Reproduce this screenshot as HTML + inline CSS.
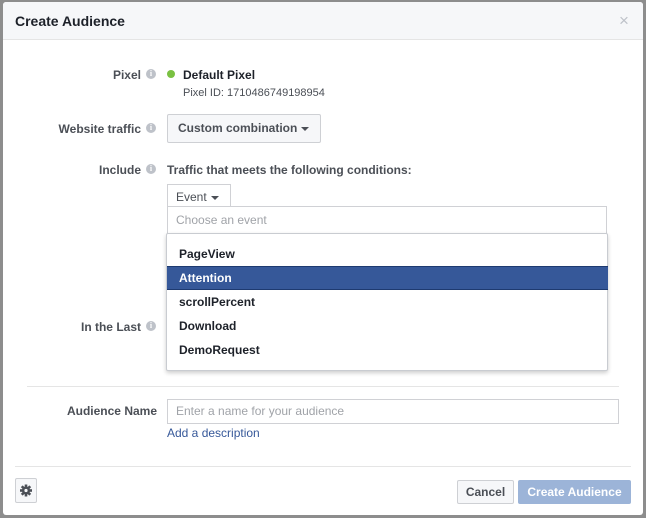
<!DOCTYPE html>
<html><head><style>
*{box-sizing:border-box;margin:0;padding:0}
body{width:646px;height:518px;background:#8d8d8d;font-family:"Liberation Sans",Helvetica,Arial,sans-serif;position:relative;overflow:hidden;color:#1d2129}
.dlg{position:absolute;left:3px;top:2px;width:640px;height:513px;background:#fff;border-radius:3px;overflow:hidden}
.hd{position:absolute;left:0;top:0;width:640px;height:38px;background:#f6f7f9;border-bottom:1px solid #e5e5e5}
.ab{position:absolute;white-space:nowrap}
.lbl{font-size:12px;font-weight:bold;color:#4b4f56;text-align:right;width:140px}
.info{position:absolute;width:10px;height:10px;border-radius:50%;background:#bec2c9;color:#fff;font-size:8px;font-weight:bold;text-align:center;line-height:10px;font-family:"Liberation Serif",serif}
.btn{position:absolute;border:1px solid #ced0d4;background:#f6f7f9;border-radius:2px;font-size:12px;font-weight:bold;color:#4b4f56}
.caret{display:inline-block;width:0;height:0;border-left:4px solid transparent;border-right:4px solid transparent;border-top:4px solid #4b4f56;vertical-align:middle;margin-left:4px}
.inp{position:absolute;border:1px solid #d0d1d5;background:#fff;font-size:12px;color:#a0a3a8;padding-left:8px}
.it{position:absolute;left:0;width:441px;height:24px;font-size:12px;font-weight:bold;color:#1d2129;padding-left:12px;line-height:24px}
</style></head><body>
<div class="dlg">
 <div class="hd"><div class="ab" style="left:12px;top:11px;font-size:14px;font-weight:bold;color:#1d2129">Create Audience</div>
 <div class="ab" style="left:616px;top:9px;font-size:17px;color:#bec2c9">×</div></div>

 <div class="ab lbl" style="left:-2px;top:66px">Pixel</div><div class="info" style="left:143px;top:67px">i</div>
 <div class="ab" style="left:164px;top:68px;width:8px;height:8px;border-radius:50%;background:#7ac142"></div>
 <div class="ab" style="left:180px;top:66px;font-size:12px;font-weight:bold">Default Pixel</div>
 <div class="ab" style="left:180px;top:85px;font-size:11px;color:#4b4f56">Pixel ID: 1710486749198954</div>

 <div class="ab lbl" style="left:-2px;top:120px">Website traffic</div><div class="info" style="left:143px;top:121px">i</div>
 <div class="btn" style="left:164px;top:112px;width:154px;height:29px;line-height:27px;padding-left:10px">Custom combination<span class="caret"></span></div>

 <div class="ab lbl" style="left:-2px;top:161px">Include</div><div class="info" style="left:143px;top:162px">i</div>
 <div class="ab" style="left:164px;top:161px;font-size:12px;font-weight:bold;color:#4b4f56">Traffic that meets the following conditions:</div>
 <div class="ab" style="left:164px;top:182px;width:64px;height:25px;border:1px solid #d0d1d5;border-bottom:none;background:#fff;font-size:12px;color:#4b4f56;line-height:24px;padding-left:8px">Event<span class="caret"></span></div>
 <div class="inp" style="left:164px;top:204px;width:440px;height:29px;line-height:27px">Choose an event</div>

 <div class="ab lbl" style="left:-2px;top:318px">In the Last</div><div class="info" style="left:143px;top:319px">i</div>

 <div class="ab" style="left:163px;top:231px;width:442px;height:138px;background:#fff;border:1px solid #c9ccd1;border-radius:2px;box-shadow:0 2px 4px rgba(0,0,0,.2)">
  <div class="it" style="top:8px">PageView</div>
  <div class="it" style="top:32px;background:#365899;color:#fff;border-top:1px solid #1e3a70;border-bottom:1px solid #1e3a70;line-height:22px">Attention</div>
  <div class="it" style="top:56px">scrollPercent</div>
  <div class="it" style="top:80px">Download</div>
  <div class="it" style="top:104px">DemoRequest</div>
 </div>

 <div class="ab" style="left:24px;top:384px;width:592px;height:1px;background:#e5e5e5"></div>
 <div class="ab lbl" style="left:14px;top:402px;width:140px">Audience Name</div>
 <div class="inp" style="left:164px;top:397px;width:452px;height:25px;line-height:23px">Enter a name for your audience</div>
 <div class="ab" style="left:164px;top:424px;font-size:12px;color:#365899">Add a description</div>

 <div class="ab" style="left:12px;top:464px;width:616px;height:1px;background:#e5e5e5"></div>
 <div class="btn" style="left:12px;top:476px;width:22px;height:25px">
  <svg width="20" height="23" viewBox="0 0 20 23" style="position:absolute;left:0;top:0"><g transform="translate(10,11.5)" fill="#4b4f56">
   <circle r="4"/><rect x="-1.3" y="-6" width="2.6" height="12"/><rect x="-1.3" y="-6" width="2.6" height="12" transform="rotate(45)"/><rect x="-1.3" y="-6" width="2.6" height="12" transform="rotate(90)"/><rect x="-1.3" y="-6" width="2.6" height="12" transform="rotate(135)"/>
   <circle r="1.6" fill="#f6f7f9"/></g></svg>
 </div>
 <div class="btn" style="left:454px;top:478px;width:57px;height:24px;line-height:22px;text-align:center">Cancel</div>
 <div class="ab" style="left:515px;top:478px;width:113px;height:24px;background:#9cb4d8;border-radius:2px;color:#fff;font-size:12px;font-weight:bold;line-height:24px;text-align:center">Create Audience</div>
</div>
</body></html>
